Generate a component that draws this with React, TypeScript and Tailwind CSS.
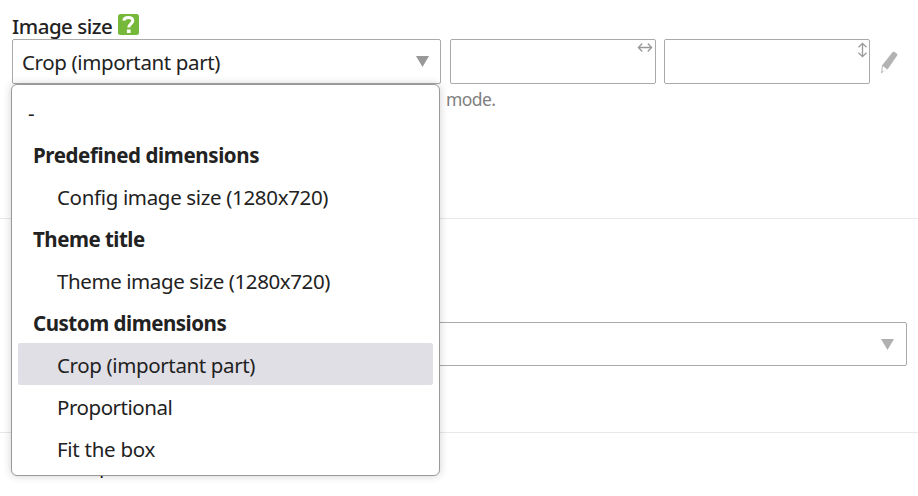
import React from "react";

type Option = { label: string; kind: "blank" | "group" | "item"; selected?: boolean; spacing: string };

const options: Option[] = [
  { label: "-", kind: "blank", spacing: "tracking-normal" },
  { label: "Predefined dimensions", kind: "group", spacing: "tracking-[-0.39px]" },
  { label: "Config image size (1280x720)", kind: "item", spacing: "tracking-[-0.34px]" },
  { label: "Theme title", kind: "group", spacing: "tracking-[-0.5px]" },
  { label: "Theme image size (1280x720)", kind: "item", spacing: "tracking-[-0.41px]" },
  { label: "Custom dimensions", kind: "group", spacing: "tracking-[-0.47px]" },
  { label: "Crop (important part)", kind: "item", selected: true, spacing: "tracking-[-0.37px]" },
  { label: "Proportional", kind: "item", spacing: "tracking-[-0.46px]" },
  { label: "Fit the box", kind: "item", spacing: "tracking-[-0.28px]" },
];

const kindClass = {
  blank: "pl-[10px]",
  group: "pl-[15px] font-bold",
  item: "pl-[39px]",
};

function Caret({ color }: { color: string }) {
  return (
    <svg width="13" height="11" viewBox="0 0 13 11" className="block">
      <path d="M0 0h13L6.5 11z" fill={color} />
    </svg>
  );
}

function SizeArrow({ vertical = false }: { vertical?: boolean }) {
  return (
    <svg
      width="16"
      height="16"
      viewBox="0 0 16 16"
      fill="none"
      stroke="#999"
      strokeWidth="1.3"
      className={vertical ? "rotate-90" : ""}
    >
      <path d="M1.5 7.5h13M5.2 3.5L1.4 7.5l3.8 4M10.8 3.5l3.8 4-3.8 4" />
    </svg>
  );
}

function Menu() {
  return (
    <ul className="absolute left-[-1px] top-[45px] z-10 w-[429px] rounded-[6px] border border-[#999] bg-white p-[6px] shadow-[0_0_9px_rgba(0,0,0,0.19)]">
      {options.map((o) => (
        <li
          key={o.label}
          className={`flex h-[42px] items-center whitespace-nowrap rounded-[2px] pt-[1px] ${kindClass[o.kind]} ${o.spacing} ${o.selected ? "bg-[#e0dfe6]" : ""}`}
        >
          {o.label}
        </li>
      ))}
    </ul>
  );
}

export default function App() {
  return (
    <div className="h-[496px] w-[918px] overflow-hidden bg-white font-['Noto_Sans',sans-serif] text-[20.5px] leading-[28px] text-[#222]">
      <section className="h-[219px] border-b border-[#e8e8e8] pl-[12px] pt-[12px]">
        <div className="flex h-[27px] items-start">
          <h3 className="w-[106px] whitespace-nowrap font-medium tracking-[-0.5px]">Image size</h3>
          <svg width="21" height="21" viewBox="0 0 21 21" className="mt-[2px]">
            <rect width="21" height="21" rx="2.5" fill="#76b83a" />
            <path
              d="M5.8 6.6C6.1 4.4 8 3.4 10.4 3.4c2.7 0 4.4 1.3 4.4 3.4 0 3-4.1 3.2-4.1 6.8"
              fill="none"
              stroke="#fff"
              strokeWidth="3"
            />
            <path d="M8.9 15.5h3.7v3.5H8.9z" fill="#fff" />
          </svg>
        </div>
        <div className="flex h-[45px]">
          <div className="relative mr-[9px] flex w-[429px] items-center justify-between rounded-[2px] border border-[#aaa] pl-[9px] pr-[11px]">
            <span className="tracking-[-0.37px]">Crop (important part)</span>
            <Caret color="#999" />
            <div className="absolute left-[-1px] top-[-1px]">
              <Menu />
            </div>
          </div>
          <div className="mr-[8px] flex w-[206px] justify-end rounded-[2px] border border-[#aaa] pr-[2px]">
            <SizeArrow />
          </div>
          <div className="flex w-[206px] justify-end rounded-[2px] border border-[#aaa] pt-[2px]">
            <div className="-mr-[1px]">
              <SizeArrow vertical />
            </div>
          </div>
          <svg width="18" height="23" viewBox="0 0 18 23" className="ml-[10px] mt-[12px]">
            <path d="M12.2 1.5c.9-1.1 1.6-1 2.5-.4l1.9 1.3c.9.7 1.1 1.4.4 2.4L8.2 17.6 1 22.4 2 14.6z" fill="#b3b3b3" />
            <path d="M2.8 15.6c1.3-.4 1.9.3 1.9 1.3 1.2 0 2.1.6 2.1 1.5l-3.6 2.3-.9-.8z" fill="#fff" />
          </svg>
        </div>
        <p className="ml-[434px] mt-[1px] text-[17.5px] tracking-[-0.6px] text-[#808080]">mode.</p>
      </section>
      <section className="h-[214px] border-b border-[#e8e8e8] pl-[12px] pt-[103px]">
        <div className="flex h-[44px] w-[895px] items-center justify-end rounded-[2px] border border-[#aaa] pr-[12px]">
          <Caret color="#b0b0b0" />
        </div>
      </section>
      <p className="pl-[99px] pt-[18px]">p</p>
    </div>
  );
}
